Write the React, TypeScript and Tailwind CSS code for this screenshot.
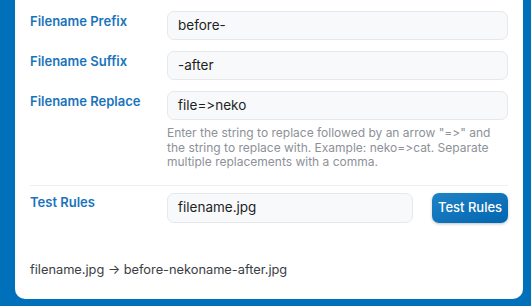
export default function App() {
  return (
    <div className="w-[531px] h-[306px] bg-[#0070ba] pl-[15px] pr-[8px] overflow-hidden font-['Inter','Noto_Sans',sans-serif] [font-feature-settings:'calt'_0,'liga'_0]">
      <div className="bg-white rounded-b-[10px] pt-[11px] px-[15px] pb-[20px]">
        {/* ── fields ── */}
        <div className="flex flex-col gap-[11px]">
          <div className="flex">
            <label className="w-[137px] shrink-0 pt-[2px] text-[13px] leading-[16px] font-semibold text-[#1a74bb]">Filename Prefix</label>
            <div className="flex-1 h-[29px] rounded-[7px] border border-[#e6e8eb] bg-[#f8f9fb] px-[10px] flex items-center text-[13.5px] text-[#1d1f23]">before-</div>
          </div>
          <div className="flex">
            <label className="w-[137px] shrink-0 pt-[2px] text-[13px] leading-[16px] font-semibold text-[#1a74bb]">Filename Suffix</label>
            <div className="flex-1 h-[29px] rounded-[7px] border border-[#e6e8eb] bg-[#f8f9fb] px-[10px] flex items-center text-[13.5px] text-[#1d1f23]">-after</div>
          </div>
          <div className="flex">
            <label className="w-[137px] shrink-0 pt-[2px] text-[13px] leading-[16px] font-semibold text-[#1a74bb]">Filename Replace</label>
            <div className="flex-1">
              <div className="h-[29px] rounded-[7px] border border-[#e6e8eb] bg-[#f8f9fb] px-[10px] flex items-center text-[13.5px] text-[#1d1f23]">file=&gt;neko</div>
              <p className="mt-[6px] pr-[16px] text-[12px] leading-[14.5px] text-[#8d9198]">
                Enter the string to replace followed by an arrow "=&gt;" and the string to replace with. Example: neko=&gt;cat. Separate multiple replacements with a comma.
              </p>
            </div>
          </div>
        </div>

        <div className="mt-[15px] border-t border-[#e8f0f8]" />

        {/* ── test ── */}
        <div className="flex mt-[7px]">
          <label className="w-[137px] shrink-0 pt-[1px] text-[13px] leading-[16px] font-semibold text-[#1a74bb]">Test Rules</label>
          <div className="flex-1 flex gap-[19px]">
            <div className="flex-1 h-[30px] rounded-[7px] border border-[#e6e8eb] bg-[#f8f9fb] px-[10px] flex items-center text-[13.5px] text-[#1d1f23]">filename.jpg</div>
            <button className="w-[76px] h-[30px] rounded-[7px] bg-gradient-to-br from-[#1f82c6] to-[#0066b0] text-white text-[13px] font-medium shadow-[0_1px_3px_rgba(0,0,0,0.25)]">Test Rules</button>
          </div>
        </div>

        <p className="mt-[38px] text-[12.8px] leading-[18px] text-[#3b3e43]">filename.jpg → before-nekoname-after.jpg</p>
      </div>
    </div>
  )
}
